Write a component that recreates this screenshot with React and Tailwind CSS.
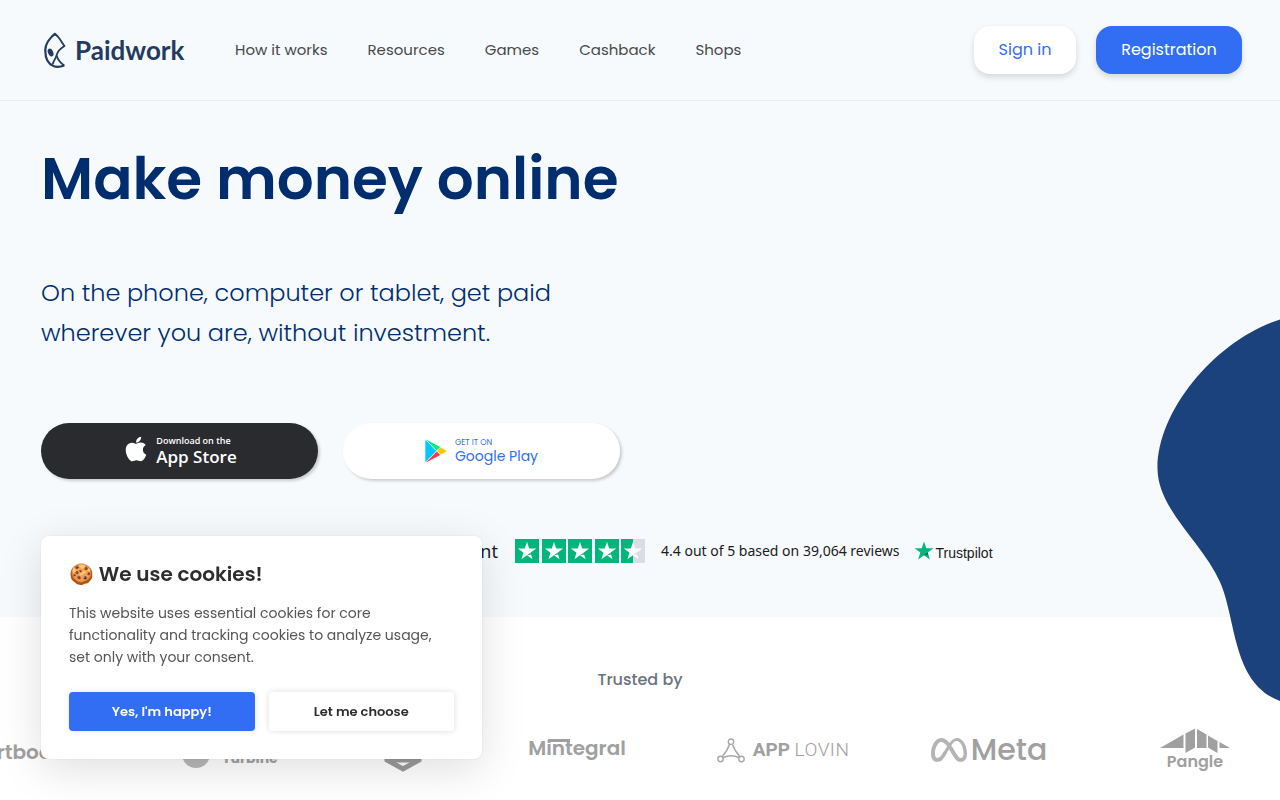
import React, { useState } from "react";
import { FaApple, FaMeta } from "react-icons/fa6";

const navLinks = ["How it works", "Resources", "Games", "Cashback", "Shops"];

const PaidworkMark = () => (
  <svg width="22" height="36" viewBox="0 0 22 36" fill="none" stroke="#243a5e" strokeLinejoin="round" aria-hidden="true">
    <path d="M10.800 2C7 5 1.500 10 1.300 18C1.200 27 5 32.500 10 34.300C13.500 35.400 17 34.700 20.300 33.500" strokeWidth="2.200" />
    <path d="M10.800 2C15.500 5 17 9.500 20.500 14C17 16 13.500 19.500 12.500 23.500C11.500 27 9.500 29 8.800 32" strokeWidth="1.800" />
    <path d="M12.500 23.500C14 28 16.500 31 20.300 33.500" strokeWidth="1.800" />
    <path d="M7 4L10.800 0.500L15 4.500L10.800 3.500Z" fill="#243a5e" stroke="none" />
    <ellipse cx="6.600" cy="20.500" rx="2.600" ry="4" transform="rotate(-25 6.600 20.500)" fill="#243a5e" stroke="none" />
  </svg>
);

const PlayMark = () => (
  <svg width="22" height="24" viewBox="0 0 22 24" aria-hidden="true">
    <path d="M0.300 0.800V23.200L11.300 12Z" fill="#00c8fa" />
    <path d="M0.700 0.300L11.700 11.500L15.300 8Z" fill="#00ee76" />
    <path d="M15.900 8.400L12.200 12L15.900 15.600L21.600 12.300V11.700Z" fill="#ffc900" />
    <path d="M11.700 12.500L0.700 23.700L15.300 16Z" fill="#ff3945" />
  </svg>
);

const STAR = "M12 3L14.200 9.600H21.100L15.500 13.700L17.600 20.300L12 16.200L6.400 20.300L8.500 13.700L2.900 9.600H9.800Z";

const RatingStar = ({ half }) => (
  <svg width="24" height="24" viewBox="0 0 24 24" aria-hidden="true">
    <rect width="24" height="24" fill={half ? "#dcdce6" : "#00b67a"} />
    {half && <rect width="12" height="24" fill="#00b67a" />}
    <path d={STAR} fill="#fff" />
    <path d="M15.500 13.700L16.200 15.600L12 16.200Z" fill={half ? "#dcdce6" : "#00b67a"} />
  </svg>
);

const TrustpilotMark = () => (
  <svg width="20" height="20" viewBox="0 0 20 20" aria-hidden="true">
    <path d="M10 0.500L12.300 7.300H19.500L13.700 11.500L15.900 18.500L10 14.200L4.100 18.500L6.300 11.500L0.500 7.300H7.700Z" fill="#00b67a" />
    <path d="M13.700 11.500L14.300 13.200L10 14.200Z" fill="#005128" />
  </svg>
);

const AppLovinMark = () => (
  <svg width="28" height="25" viewBox="0 0 28 25" fill="none" stroke="#a8a8a8" strokeWidth="1.400" aria-hidden="true">
    <circle cx="14" cy="3.700" r="2.700" />
    <circle cx="3.500" cy="21" r="2.700" />
    <circle cx="24.500" cy="21" r="2.700" />
    <path d="M12.500 6.200C11 11 8 15.500 5 18.700M15.500 6.200C17 11 20 15.500 23 18.700M6 19.500C11 17.300 17 17.300 22 19.500" />
  </svg>
);

const PangleMark = () => (
  <svg width="70" height="25" viewBox="0 0 70 25" fill="#a0a0a0" aria-hidden="true">
    <path d="M0 20L23.500 6.500V20Z" />
    <path d="M25.500 5.500L35 0.500V19.500L25.500 25Z" />
    <path d="M37 1L46.500 6.500V20H37Z" />
    <path d="M48 7.500L57.500 13V25L48 19.500Z" />
    <path d="M59.500 14L70 20H59.500Z" />
  </svg>
);

const HexMark = () => (
  <svg width="38" height="43" viewBox="0 0 38 43" fill="none" stroke="#9a9a9a" strokeWidth="5" aria-hidden="true">
    <path d="M19 3L35 12V31L19 40L3 31V12Z" />
    <path d="M3 31H35" />
  </svg>
);

const PartnerLogos = () => (
  <div className="flex h-12 -ml-[50px] text-[#a0a0a0]">
    <div className="w-[178px] shrink-0 flex items-center text-xl font-semibold">Smartbook</div>
    <div className="w-[204px] shrink-0 flex items-center justify-center gap-3">
      <div className="size-7 mt-1 rounded-full bg-[#b8b8b8]" />
      <span className="text-sm font-bold mt-3">Turbine</span>
    </div>
    <div className="w-[142px] shrink-0 flex items-end justify-center pb-1">
      <HexMark />
    </div>
    <div className="w-[206px] shrink-0 flex items-center justify-center">
      <span className="relative text-xl font-semibold pb-2">
        Mintegral
        <span className="absolute left-5 top-[5px] w-[22px] h-[3px] bg-[#a0a0a0]" />
      </span>
    </div>
    <div className="w-[206px] shrink-0 flex items-center justify-center gap-2 pb-1 font-[Roboto] text-[19px]">
      <AppLovinMark />
      <span>
        <span className="font-bold">APP</span> <span className="font-light tracking-wide">LOVIN</span>
      </span>
    </div>
    <div className="w-[206px] shrink-0 flex items-center justify-center gap-1 pb-1 text-3xl font-medium">
      <FaMeta size={36} className="text-[#b4b4b4]" />
      Meta
    </div>
    <div className="w-[206px] shrink-0 flex flex-col items-center">
      <PangleMark />
      <span className="text-base leading-[18px] font-semibold">Pangle</span>
    </div>
  </div>
);

const CookieBanner = ({ onClose }) => (
  <div
    role="dialog"
    aria-labelledby="cookie-title"
    className="fixed z-20 left-[41px] bottom-[41px] w-[441px] max-w-full px-7 pt-6 pb-7 rounded-lg bg-white shadow-[0_10px_44px_rgba(2,2,3,0.13),0_0_2px_rgba(2,2,3,0.1)]"
  >
    <h2 id="cookie-title" className="text-xl leading-7 font-semibold text-[#2d2d2d]">🍪 We use cookies!</h2>
    <p className="mt-[14px] text-sm leading-[22px] text-[#555]">
      This website uses essential cookies for core functionality and tracking cookies to analyze usage, set only with your consent.
    </p>
    <div className="mt-6 grid grid-cols-2 gap-[14px] text-[13px] font-semibold">
      <button onClick={onClose} className="h-[39px] rounded bg-[#326ef3] text-white shadow-[0_0_6px_rgba(0,0,0,0.1)]">Yes, I'm happy!</button>
      <button onClick={onClose} className="h-[39px] rounded bg-white text-[#2d2d2d] shadow-[0_0_6px_rgba(0,0,0,0.14)]">Let me choose</button>
    </div>
  </div>
);

const App = () => {
  const [showCookies, setShowCookies] = useState(true);

  return (
    <div className="relative min-h-screen overflow-hidden bg-white font-[Poppins,Inter,sans-serif]">
      <header className="flex items-center h-[101px] pl-11 pr-[38px] bg-[#f6fafd] border-b border-[#e8eef2]">
        <a href="#" className="flex items-center gap-[9px] text-[#243a5e]">
          <PaidworkMark />
          <span className="w-[110px] font-[Lato] text-[26px] leading-9 font-bold">Paidwork</span>
        </a>
        <nav className="flex gap-10 ml-[50px] text-[15px] text-[#484848]">
          {navLinks.map((link) => (
            <a key={link} href="#">{link}</a>
          ))}
        </nav>
        <div className="flex gap-5 ml-auto">
          <button className="h-12 w-[102px] rounded-2xl bg-white text-[#326ef3] shadow-[0_3px_6px_rgba(0,0,0,0.14)]">Sign in</button>
          <button className="h-12 w-[146px] rounded-2xl bg-[#326ef3] text-white shadow-[0_3px_6px_rgba(0,0,0,0.14)]">Registration</button>
        </div>
      </header>

      <main>
        <section className="pb-[54px] px-[41px] pt-[33px] bg-[#f6fafd] text-[#002d6d]">
          <h1 className="text-[58px] leading-[90px] font-semibold">Make money online</h1>
          <p className="mt-[49px] max-w-[560px] text-2xl leading-10 font-light">
            On the phone, computer or tablet, get paid wherever you are, without investment.
          </p>
          <div className="flex gap-[25px] mt-[70px]">
            <button className="flex items-center justify-center gap-[6px] w-[277px] h-14 rounded-full bg-[#2a2b2f] text-white shadow-[2px_2px_3px_rgba(0,0,0,0.18)]">
              <FaApple size={28} className="-mt-1" />
              <span className="flex flex-col items-start font-['Open_Sans']">
                <span className="text-[9px] leading-3 font-semibold">Download on the</span>
                <span className="text-[17px] leading-5 font-semibold">App Store</span>
              </span>
            </button>
            <button className="flex items-center justify-center gap-2 w-[277px] h-14 rounded-full bg-white text-[#326ef3] shadow-[2px_2px_3px_rgba(0,0,0,0.18)]">
              <PlayMark />
              <span className="flex flex-col items-start">
                <span className="text-[8px] leading-[10px]">GET IT ON</span>
                <span className="text-sm leading-4">Google Play</span>
              </span>
            </button>
          </div>
          <div className="flex items-center h-6 mt-[60px] ml-[379px] text-[#1b1b21] font-['Noto_Sans']">
            <span className="w-[78px] text-right text-lg">Excellent</span>
            <div className="flex justify-between w-[130px] ml-[17px]" aria-label="4.4 stars">
              <RatingStar />
              <RatingStar />
              <RatingStar />
              <RatingStar />
              <RatingStar half />
            </div>
            <span className="ml-4 text-sm whitespace-nowrap">4.4 out of 5 based on 39,064 reviews</span>
            <a href="#" className="flex items-center gap-px ml-[15px] font-['Liberation_Sans'] text-sm">
              <TrustpilotMark />
              <span className="pt-1">Trustpilot</span>
            </a>
          </div>
        </section>

        <section className="pt-[51px]">
          <h2 className="text-center text-base leading-6 font-medium text-[#6b7280]">Trusted by</h2>
          <div className="mt-9 overflow-hidden">
            <PartnerLogos />
          </div>
        </section>
      </main>

      <svg className="absolute right-0 top-[319px]" width="123" height="383" viewBox="0 0 123 383" fill="#1b427c" aria-hidden="true">
        <path d="M123 0.500C61 20 0 90 0.500 150C1 191 46 224 63 263C80 302 75 364 123 382Z" />
      </svg>

      {showCookies && <CookieBanner onClose={() => setShowCookies(false)} />}
    </div>
  );
};

export default App;
